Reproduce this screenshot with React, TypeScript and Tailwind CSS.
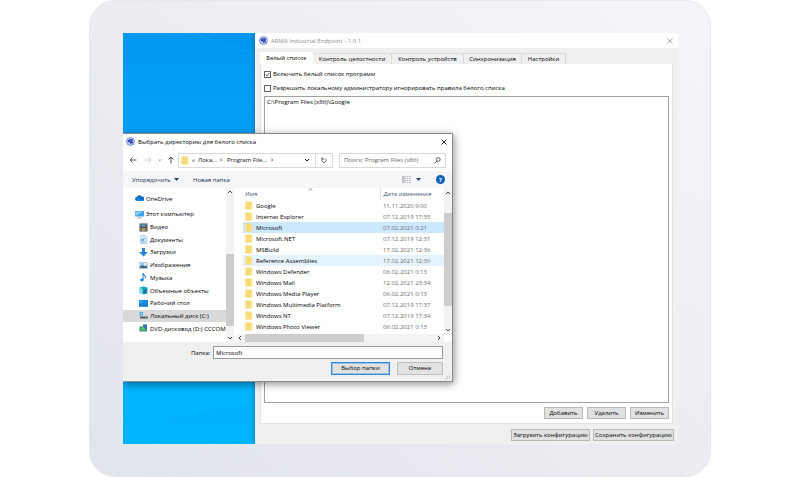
import React from "react";

type IconProps = { className?: string };

function AppLogo({ className = "" }: IconProps) {
  return (
    <svg viewBox="0 0 18 18" className={`size-[9px] shrink-0 ${className}`} aria-hidden="true">
      <circle cx="9" cy="9" r="8" fill="#c9d1f0" stroke="#6b7fd0" strokeWidth="1.6" />
      <path d="M3 7 8 4l6 1-1 4 1 5-4-2-1 3-2-5-3 1z" fill="#2742b8" />
      <path d="m7 7.500 4-.6-1.600 2.300z" fill="#a9b5ea" />
    </svg>
  );
}

function Folder({ className = "h-[9px] w-[8px]" }: IconProps) {
  return (
    <svg viewBox="0 0 16 18" className={`shrink-0 ${className}`} aria-hidden="true">
      <path d="M1 1h11l2 2v14H1z" fill="#f8d976" />
      <path d="M1 1h3v16H1z" fill="#fbe08a" />
      <path d="M11 7h4v10h-4z" fill="#fbe496" />
    </svg>
  );
}

function Chevron({ d, className = "size-[6px]" }: { d: string; className?: string }) {
  return (
    <svg viewBox="0 0 12 12" className={`shrink-0 ${className}`} fill="none" stroke="currentColor" strokeWidth="2" aria-hidden="true">
      <path d={d} />
    </svg>
  );
}
const UP = "m2 8 4-4 4 4";
const DOWN = "m2 4 4 4 4-4";
const LEFT = "M8 2 4 6l4 4";
const RIGHT = "m4 2 4 4-4 4";

function Arrow({ className }: { className: string }) {
  return (
    <svg viewBox="0 0 16 16" className={`size-[8px] shrink-0 ${className}`} fill="none" stroke="currentColor" strokeWidth="2" aria-hidden="true">
      <path d="M15 8H2M7 3 2 8l5 5" />
    </svg>
  );
}

function Close() {
  return (
    <svg viewBox="0 0 12 12" className="size-[6px]" fill="none" stroke="currentColor" strokeWidth="1.7" aria-hidden="true">
      <path d="m1 1 10 10M11 1 1 11" />
    </svg>
  );
}

const drawings: Record<string, React.ReactNode> = {
  cloud: (
    <>
      <path d="M4 14a4 4 0 0 1 0-8A5 5 0 0 1 13 5a4.500 4.500 0 0 1 2 9z" fill="#0f6cbd" />
      <path d="M4 14a4 4 0 0 1 3-6l8 6z" fill="#1b84d8" />
    </>
  ),
  pc: (
    <>
      <path d="M0 2h18v11H0z" fill="#3ba5e4" />
      <path d="M1 3h16L1 12z" fill="#86cff5" />
      <path d="M5 15h8v1.500H5z" fill="#7b8a96" />
    </>
  ),
  video: (
    <>
      <path d="M1 1h16v16H1z" fill="#46464a" />
      <path d="M5 2h8v6H5z" fill="#5a8fc6" />
      <path d="M5 10h8v6H5z" fill="#b8975f" />
      <path d="M3 2v14M15 2v14" stroke="#ddd" strokeDasharray="1.500" />
    </>
  ),
  docs: (
    <>
      <path d="M3 1h9l4 4v12H3z" fill="#d5ecf9" stroke="#8fb7cf" />
      <path d="M8 7h5M5 14h8" stroke="#5eaadb" strokeWidth="1.500" />
      <path d="M5 8h4v4H5z" fill="#479fd3" />
    </>
  ),
  down: <path d="M6 0h6v8h6l-9 9-9-9h6z" fill="#2f83d6" />,
  images: (
    <>
      <path d="M0 3h18v12H0z" fill="#d9edf7" stroke="#8e9fa9" />
      <path d="M2 10l5-2 4 2 5-1v5H2z" fill="#376b8e" />
      <path d="M3 5h7v2H3z" fill="#4ba4da" />
    </>
  ),
  music: (
    <>
      <path d="M8 1c1 4 6 4 5 9" fill="none" stroke="#1683d8" strokeWidth="2.200" />
      <path d="M8 1v13" stroke="#1683d8" strokeWidth="2" />
      <ellipse cx="6" cy="14" rx="3.400" ry="2.800" fill="#1683d8" />
    </>
  ),
  cube: (
    <>
      <path d="M1 3 9 1l8 2v12l-7 2-9-3z" fill="#19a5bd" />
      <path d="m1 3 6 3v10l-6-2z" fill="#7fe0ea" />
      <path d="M9 7h6v7H9z" fill="#0b7790" />
    </>
  ),
  desk: (
    <>
      <path d="M0 2h18v13H0z" fill="#1588de" />
      <path d="M0 13h18v2H0z" fill="#0a66b6" />
      <path d="M1 3h9l-9 7z" fill="#38a5ef" />
    </>
  ),
  disk: (
    <>
      <path d="M1 2h3v3H1zm4 0h3v3H5zM1 6h3v3H1zm4 0h3v3H5z" fill="#22a4e4" />
      <path d="M2 11h16v4H2z" fill="#4e565c" />
      <path d="M13 13h3" stroke="#4de06c" strokeWidth="1.500" />
    </>
  ),
  dvd: (
    <>
      <path d="M1 5h15v10H1z" fill="#35907f" />
      <path d="M8 1h8v8H8z" fill="#2f6cb8" />
      <path d="m4 9 4-4 4 4v4H4z" fill="#55c26b" />
    </>
  ),
};

function TreeIcon({ name, className = "size-[9px]" }: { name: string; className?: string }) {
  return (
    <svg viewBox="0 0 18 18" className={`shrink-0 ${className}`} aria-hidden="true">
      {drawings[name]}
    </svg>
  );
}

const tabs = [
  ["Белый список", "w-[53px]"],
  ["Контроль целостности", "w-[79px]"],
  ["Контроль устройств", "w-[72px]"],
  ["Синхронизация", "w-[58px]"],
  ["Настройки", "w-[44px]"],
];

const places = [
  ["video", "Видео"],
  ["docs", "Документы"],
  ["down", "Загрузки"],
  ["images", "Изображения"],
  ["music", "Музыка"],
  ["cube", "Объемные объекты"],
  ["desk", "Рабочий стол"],
  ["disk", "Локальный диск (C:)"],
  ["dvd", "DVD-дисковод (D:) CCCOM"],
];

const files = [
  ["Google", "11.11.2020 9:00"],
  ["Internet Explorer", "07.12.2019 17:35"],
  ["Microsoft", "07.02.2021 0:21"],
  ["Microsoft.NET", "07.12.2019 12:31"],
  ["MSBuild", "17.02.2021 12:36"],
  ["Reference Assemblies", "17.02.2021 12:36"],
  ["Windows Defender", "06.02.2021 0:13"],
  ["Windows Mail", "12.02.2021 23:34"],
  ["Windows Media Player", "06.02.2021 0:13"],
  ["Windows Multimedia Platform", "07.12.2019 17:37"],
  ["Windows NT", "07.12.2019 17:34"],
  ["Windows Photo Viewer", "06.02.2021 0:13"],
];

function Button({ children, className }: { children: string; className: string }) {
  return (
    <button className={`h-[12px] whitespace-nowrap border border-[#b9b9b9] bg-[#e1e1e1] text-center leading-[10px] ${className}`}>
      {children}
    </button>
  );
}

function Option({ id, label, checked }: { id: string; label: string; checked?: boolean }) {
  return (
    <div className="flex h-[14px] items-center gap-[2px]">
      <span className="relative flex size-[7px] shrink-0">
        <input
          id={id}
          type="checkbox"
          defaultChecked={checked}
          className="peer size-[7px] appearance-none border border-[#666] bg-white"
        />
        <svg viewBox="0 0 14 14" className="pointer-events-none absolute inset-0 hidden peer-checked:block" fill="none" stroke="#333" strokeWidth="1.6" aria-hidden="true">
          <path d="m3 7 3 3 5-6" />
        </svg>
      </span>
      <label htmlFor={id} className="whitespace-nowrap">{label}</label>
    </div>
  );
}

function MainWindow() {
  return (
    <section className="flex min-w-0 flex-1 flex-col bg-[#f0f0f0] shadow-[0_0_5px_rgba(0,0,0,0.35)]">
      <header className="flex h-[15px] shrink-0 items-center gap-[3px] bg-white pl-[4px] pr-[5px] text-[#8c8c8c]">
        <AppLogo />
        <h1 className="flex-1 font-medium">ARMA Industrial Endpoint - 1.0.1</h1>
        <button aria-label="Закрыть" className="text-[#999]"><Close /></button>
      </header>
      <div role="tablist" className="mt-[4px] flex shrink-0 items-end px-[5px]">
        {tabs.map(([name, width], i) => (
          <button
            key={name}
            role="tab"
            aria-selected={i === 0}
            className={`${width} shrink-0 whitespace-nowrap text-center ${
              i === 0 ? "h-[12px] bg-white" : "h-[11px] border-r border-t border-[#dcdcdc] bg-[#f0f0f0]"
            }`}
          >
            {name}
          </button>
        ))}
      </div>
      <div className="mx-[5px] flex flex-1 flex-col border border-t-0 border-[#e2e2e2] bg-white px-[3px] pb-[4px] pt-[3px]">
        <Option id="enable" label="Включить белый список программ" checked />
        <Option id="ignore" label="Разрешить локальному администратору игнорировать правила белого списка" />
        <ul className="mt-[1px] flex-1 border border-[#a0a0a0] px-[2px]">
          <li>C:\Program Files (x86)\Google</li>
        </ul>
        <div className="mt-[4px] flex justify-end gap-[4px]">
          <Button className="w-[39px]">Добавить</Button>
          <Button className="w-[39px]">Удалить</Button>
          <Button className="w-[39px]">Изменить</Button>
        </div>
      </div>
      <footer className="flex shrink-0 justify-end gap-[3px] pb-[3px] pr-[4px] pt-[5px]">
        <Button className="w-[79px]">Загрузить конфигурацию</Button>
        <Button className="w-[81px]">Сохранить конфигурацию</Button>
      </footer>
    </section>
  );
}

function FolderDialog() {
  return (
    <section
      role="dialog"
      aria-label="Выбрать директорию для белого списка"
      className="absolute left-0 top-[100px] flex w-[330px] flex-col border-y border-r border-[#8a8a8a] bg-white shadow-[1px_2px_8px_rgba(0,0,0,0.45)]"
    >
      <header className="flex h-[15px] items-center gap-[3px] pl-[3px] pr-[5px]">
        <AppLogo />
        <h2 className="flex-1 font-medium">Выбрать директорию для белого списка</h2>
        <button aria-label="Закрыть"><Close /></button>
      </header>
      <div className="flex h-[22px] items-center pl-[6px] pr-[6px] text-[#555]">
        <button aria-label="Назад"><Arrow className="text-[#555]" /></button>
        <button aria-label="Вперёд" className="ml-[7px]"><Arrow className="rotate-180 text-[#ccc]" /></button>
        <button aria-label="Журнал" className="ml-[6px]"><Chevron d={DOWN} className="size-[4px]" /></button>
        <button aria-label="Вверх" className="ml-[5px]"><Arrow className="rotate-90" /></button>
        <div className="ml-[3px] flex h-[15px] flex-1 items-center border border-[#d9d9d9] pl-[2px] text-[#111]">
          <Folder />
          <span className="ml-[3px]">«</span>
          <span className="ml-[3px] w-[21px] whitespace-nowrap">Лока...</span>
          <Chevron d={RIGHT} className="size-[4px]" />
          <span className="ml-[4px] w-[43px] whitespace-nowrap">Program File...</span>
          <Chevron d={RIGHT} className="size-[4px]" />
          <button aria-label="Показать путь" className="ml-auto mr-[5px]"><Chevron d={DOWN} /></button>
          <button aria-label="Обновить" className="flex h-[13px] w-[17px] items-center justify-center border-l border-[#d9d9d9]">
            <svg viewBox="0 0 12 12" className="size-[6px]" fill="none" stroke="#444" strokeWidth="1.700" aria-hidden="true">
              <path d="M3 3.500a4.300 4.300 0 1 0 6 0M2 1v3h4" />
            </svg>
          </button>
        </div>
        <div className="ml-[6px] flex h-[15px] w-[107px] items-center border border-[#d9d9d9] px-[4px]">
          <input
            aria-label="Поиск"
            placeholder="Поиск: Program Files (x86)"
            className="min-w-0 flex-1 placeholder:text-[#666]"
          />
          <svg viewBox="0 0 14 14" className="size-[7px]" fill="none" stroke="#444" strokeWidth="1.700" aria-hidden="true">
            <circle cx="8.500" cy="5" r="3.800" />
            <path d="m6 8-5 5" />
          </svg>
        </div>
      </div>
      <div className="flex h-[17px] items-center bg-[#f5f6f7] pl-[9px] pr-[7px] text-[#1e3152]">
        <button className="flex w-[61px] items-center gap-[3px]">
          Упорядочить
          <svg viewBox="0 0 10 6" className="h-[3px] w-[5px]" aria-hidden="true"><path d="M0 0h10L5 6z" fill="#2c3e5c" /></svg>
        </button>
        <button>Новая папка</button>
        <button aria-label="Вид" className="ml-auto flex items-center gap-[5px]">
          <svg viewBox="0 0 18 14" className="h-[7px] w-[9px]" aria-hidden="true">
            <path d="M0 0h7v14H0z" fill="#c4c6c9" />
            <path d="M9 1h3m2 0h4M9 5h3m2 0h4M9 9h3m2 0h4M9 13h3m2 0h4" stroke="#a4a7ab" strokeWidth="1.500" />
          </svg>
          <svg viewBox="0 0 10 6" className="h-[3px] w-[5px]" aria-hidden="true"><path d="M0 0h10L5 6z" fill="#2c3e5c" /></svg>
        </button>
        <button aria-label="Справка" className="ml-[15px] flex size-[9px] items-center justify-center rounded-full bg-[#0b62b8] font-bold text-white">?</button>
      </div>

      <div className="flex h-[154px]">
        <nav className="flex w-[103px] shrink-0 flex-col overflow-hidden whitespace-nowrap">
          <div className="mt-[4px] flex h-[13px] items-center gap-[2px] pl-[12px]">
            <TreeIcon name="cloud" />
            OneDrive
          </div>
          <div className="mt-[3px] flex h-[127px] flex-col">
            <div className="flex flex-1 items-center gap-[2px] pl-[12px]">
              <TreeIcon name="pc" />
              Этот компьютер
            </div>
            {places.map(([icon, name]) => (
              <div key={name} className={`flex flex-1 items-center gap-[2px] pl-[16px] ${icon === "disk" ? "bg-[#d9d9d9]" : ""}`}>
                <TreeIcon name={icon} />
                {name}
              </div>
            ))}
          </div>
        </nav>
        <div className="flex w-[8px] shrink-0 flex-col items-center bg-[#f3f3f3] text-[#444]">
          <Chevron d={UP} className="my-[1px] size-[6px]" />
          <div className="mt-[58px] h-[72px] w-full bg-[#cdcdcd]" />
          <Chevron d={DOWN} className="mt-auto mb-[1px] size-[6px]" />
        </div>
        <div className="ml-[3px] flex min-w-0 flex-1 flex-col">
          <div className="flex flex-1">
            <div className="relative min-w-0 flex-1">
              <table className="w-full table-fixed border-collapse text-left">
                <thead>
                  <tr className="h-[12px] text-[#44597a]">
                    <th className="p-0 pl-[8px] font-medium">Имя</th>
                    <th className="w-[64px] border-l border-[#e5e5e5] p-0 pl-[3px] font-medium">Дата изменения</th>
                  </tr>
                </thead>
                <tbody>
                  {files.map(([name, date], i) => (
                    <tr key={name}>
                      <td className="p-0 pl-[6px]">
                        <div className={`flex h-[11px] items-center gap-[3px] whitespace-nowrap pl-[2px] ${i === 2 ? "bg-[#cce8ff]" : i === 5 ? "bg-[#e5f3ff]" : ""}`}>
                          <Folder />
                          {name}
                        </div>
                      </td>
                      <td className="p-0 text-[#6d6d6d]">
                        <div className={`flex h-[11px] items-center whitespace-nowrap pl-[3px] ${i === 2 ? "bg-[#cce8ff]" : i === 5 ? "bg-[#e5f3ff]" : ""}`}>{date}</div>
                      </td>
                    </tr>
                  ))}
                </tbody>
              </table>
              <Chevron d={UP} className="absolute left-[71px] top-[-1px] size-[5px] text-[#777]" />
            </div>
            <div className="flex w-[8px] shrink-0 flex-col items-center bg-[#f3f3f3] text-[#444]">
              <Chevron d={UP} className="mt-[2px] size-[6px]" />
              <div className="mt-[17px] h-[93px] w-full bg-[#cdcdcd]" />
              <Chevron d={DOWN} className="mt-auto mb-[1px] size-[6px]" />
            </div>
          </div>
          <div className="mr-[8px] flex h-[8px] items-center bg-[#f3f3f3] text-[#444]">
            <Chevron d={LEFT} className="size-[6px]" />
            <div className="ml-[2px] h-full w-[119px] bg-[#cdcdcd]" />
            <Chevron d={RIGHT} className="ml-auto mr-[2px] size-[6px]" />
          </div>
        </div>
      </div>

      <footer className="relative bg-[#f0f0f0] pb-[6px] pl-[68px] pr-[9px] pt-[4px]">
        <div className="flex items-center gap-[3px]">
          <label htmlFor="folder" className="w-[19px] whitespace-nowrap">Папка:</label>
          <input id="folder" defaultValue="Microsoft" className="h-[13px] min-w-0 flex-1 border border-[#9a9a9a] bg-white px-[2px]" />
        </div>
        <div className="mt-[3px] flex justify-end gap-[7px]">
          <button className="h-[13px] w-[59px] border border-[#2a8ad8] bg-[#e1e1e1] leading-[11px] ring-1 ring-inset ring-[#0078d7]/30">Выбор папки</button>
          <button className="h-[13px] w-[46px] border border-[#c0c0c0] bg-[#e1e1e1] leading-[11px]">Отмена</button>
        </div>
        <svg viewBox="0 0 6 6" className="absolute bottom-[1px] right-[1px] size-[6px]" fill="#b5b5b5" aria-hidden="true">
          <path d="M4 0h1v1H4zM2 2h1v1H2zm2 0h1v1H4zM0 4h1v1H0zm2 0h1v1H2zm2 0h1v1H4z" />
        </svg>
      </footer>
    </section>
  );
}

export default function App() {
  return (
    <main className="flex h-screen min-h-[440px] bg-white px-[89px] font-['Open_Sans','Noto_Sans',sans-serif] text-[6px] font-medium leading-[10px] text-black">
      <div className="flex min-w-0 flex-1 rounded-[26px] border border-[#e6e8ec] bg-linear-to-tr from-[#e2e5eb] to-[#f3f5fa] py-[32px] pl-[33px] pr-[32px]">
        <div className="relative flex min-w-0 flex-1 overflow-hidden">
          <div className="w-[132px] shrink-0 overflow-hidden bg-linear-to-b from-[#0098f0] via-[#00a8fa] to-[#00b7ff]">
            <svg viewBox="0 0 132 411" className="h-full w-full" preserveAspectRatio="none" aria-hidden="true">
              <path d="M68 0 132 21V0z" fill="#008fe8" opacity=".2" />
              <path d="m68 0 64 21" stroke="#4fc0ff" strokeWidth="1" opacity=".2" />
              <path d="m0 392 132-22v41H0z" fill="#00aef9" opacity=".4" />
            </svg>
          </div>
          <MainWindow />
          <FolderDialog />
        </div>
      </div>
    </main>
  );
}
